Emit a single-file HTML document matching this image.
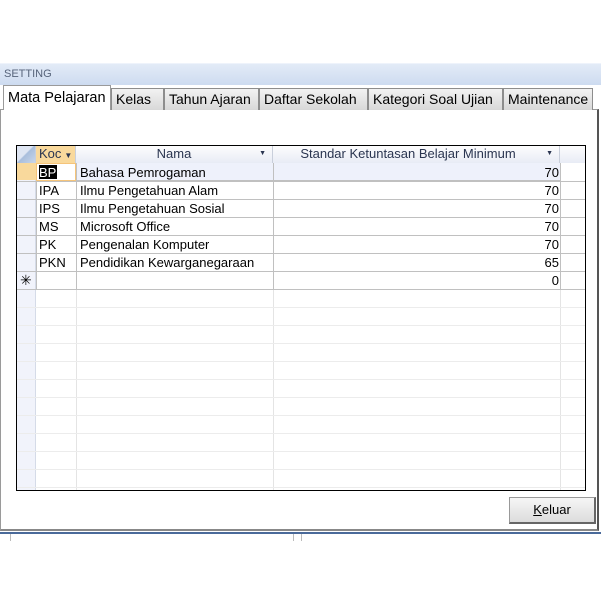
<!DOCTYPE html><html><head><style>
*{margin:0;padding:0;box-sizing:border-box}
body{width:601px;height:601px;background:#fff;position:relative;overflow:hidden;font-family:"Liberation Sans",sans-serif}
.a{position:absolute}
.tab{position:absolute;top:88px;height:22px;border:1px solid #8d8d8d;border-bottom:none;background:linear-gradient(#f2f2f2,#d8d8d8);font-size:14px;line-height:20px;padding-left:4px;color:#000}
.cell{position:absolute;font-size:13px;line-height:17px;color:#000;white-space:nowrap;overflow:hidden}
.h{position:absolute;top:146px;height:17px;background:linear-gradient(#fdfdfd,#e8ecf5);border-right:1px solid #c9cfdb;font-size:13px;line-height:16px;color:#2a3550;text-align:center}
</style></head><body>
<div class="a" style="left:0;top:63px;width:601px;height:22px;background:linear-gradient(#e3ebf7,#cddbf0);border-top:1px solid #eef3fb"></div>
<div class="a" style="left:4px;top:68px;font-size:11px;color:#56637a">SETTING</div>
<div class="a" style="left:0;top:85px;width:601px;height:25px;background:#fff"></div>
<div class="a" style="left:0;top:109px;width:599px;height:422px;background:#fff;border:1px solid #9a9a9a;border-right:2px solid #555;border-bottom:2px solid #888"></div>
<div class="tab" style="left:3px;top:85px;width:108px;height:25px;background:#fff;border-color:#9a9a9a;font-size:14.5px;line-height:24px;z-index:2">Mata Pelajaran</div>
<div class="tab" style="left:111px;width:53px">Kelas</div>
<div class="tab" style="left:164px;width:95px">Tahun Ajaran</div>
<div class="tab" style="left:259px;width:109px">Daftar Sekolah</div>
<div class="tab" style="left:368px;width:135px">Kategori Soal Ujian</div>
<div class="tab" style="left:503px;width:90px">Maintenance</div>
<div class="a" style="left:16px;top:145px;width:570px;height:346px;border:1px solid #000;background:#fff;overflow:hidden">
<div class="a" style="left:0;top:0;width:19px;height:346px;background:#f1f3fb;border-right:1px solid #d5dbe8"></div>
<div class="a" style="left:59px;top:0;width:1px;height:346px;background:#e4e4e4"></div>
<div class="a" style="left:256px;top:0;width:1px;height:346px;background:#e4e4e4"></div>
<div class="a" style="left:543px;top:0;width:1px;height:346px;background:#e4e4e4"></div>
<div id="lines"></div>
</div>
<div class="h" style="left:17px;width:19px;background:linear-gradient(135deg,#dfe6f3 45%,#a9bedc 50%,#c9d6ea)"></div>
<div class="h" style="left:36px;width:40px;background:#f9d99c;text-align:left;padding-left:3px;overflow:hidden;white-space:nowrap">Koc<span style="font-size:8px;margin-left:3px">▼</span></div>
<div class="h" style="left:76px;width:197px">Nama<span class="a" style="right:6px;font-size:7px">▼</span></div>
<div class="h" style="left:273px;width:287px;padding-right:16px">Standar Ketuntasan Belajar Minimum<span class="a" style="right:6px;font-size:7px">▼</span></div>
<div class="h" style="left:560px;width:25px;border-right:none"></div>
<div class="a" style="left:17px;top:163px;width:19px;height:17px;background:#f9d99c"></div>
<div class="a" style="left:36px;top:163px;width:524px;height:18px;background:#eef1fb;border-bottom:1px solid #c0c0c0"></div>
<div class="a" style="left:36px;top:163px;width:40px;height:18px;background:#fff;border:1px solid #f5c47a"></div>
<div class="a" style="left:39px;top:165px;width:18px;height:14px;background:#000"></div>
<div id="rows"></div>
<div class="a" style="left:509px;top:497px;width:87px;height:27px;border:1px solid #999;border-right:2px solid #666;border-bottom:2px solid #666;background:linear-gradient(#f6f6f6,#dcdcdc);font-size:13px;text-align:center;line-height:24px"><u>K</u>eluar</div>
<div class="a" style="left:0;top:532px;width:601px;height:2px;background:#4a6a9a"></div>
<div class="a" style="left:10px;top:534px;width:1px;height:7px;background:#bbb"></div>
<div class="a" style="left:293px;top:534px;width:1px;height:7px;background:#bbb"></div>
<div class="a" style="left:301px;top:534px;width:1px;height:7px;background:#bbb"></div>
<script>
var L='';for(var y=35;y<346;y+=18)L+='<div class="a" style="left:0;top:'+y+'px;width:570px;height:1px;background:'+(y<=143?'#c0c0c0':'#ececec')+'"></div>';
document.getElementById('lines').innerHTML=L;
var d=[["BP","Bahasa Pemrogaman","70"],["IPA","Ilmu Pengetahuan Alam","70"],["IPS","Ilmu Pengetahuan Sosial","70"],["MS","Microsoft Office","70"],["PK","Pengenalan Komputer","70"],["PKN","Pendidikan Kewarganegaraan","65"],["","","0"]];
var r='';d.forEach(function(x,i){var t=164+i*18;
r+='<div class="cell" style="left:39px;top:'+t+'px;color:'+(i==0?'#fff':'#000')+'">'+x[0]+'</div><div class="cell" style="left:80px;top:'+t+'px">'+x[1]+'</div><div class="cell" style="left:276px;top:'+t+'px;width:283px;text-align:right">'+x[2]+'</div>';});
r+='<div class="a" style="left:273px;top:163px;width:1px;height:126px;background:#c0c0c0"></div><div class="a" style="left:76px;top:163px;width:1px;height:126px;background:#c0c0c0"></div><div class="a" style="left:560px;top:163px;width:1px;height:126px;background:#c0c0c0"></div><div class="a" style="left:36px;top:181px;width:1px;height:108px;background:#c0c0c0"></div>';
r+='<div class="cell" style="left:20px;top:272px;font-size:14px">✳</div>';
document.getElementById('rows').innerHTML=r;
</script>
</body></html>
